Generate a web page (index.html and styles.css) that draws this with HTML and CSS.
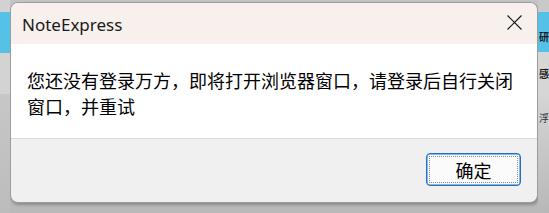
FILE: index.html
```html
<!DOCTYPE html>
<html lang="zh-CN">
<head>
<meta charset="utf-8">
<title>NoteExpress</title>
<link rel="stylesheet" href="styles.css">
</head>
<body>
<div class="desk">
  <div class="side side-left"></div>
  <div class="dialog">
    <div class="titlebar">
      <span class="title">NoteExpress</span>
      <span class="close" aria-label="关闭">
        <svg width="15" height="15" viewBox="0 0 15 15"><path d="M0.5 0.5 L14.5 14.5 M14.5 0.5 L0.5 14.5" stroke="#1b1b1b" stroke-width="1.2" fill="none"/></svg>
      </span>
    </div>
    <div class="content">
      <p class="msg">您还没有登录万方，即将打开浏览器窗口，请登录后自行关闭窗口，并重试</p>
    </div>
    <div class="footer">
      <button class="btn"><span class="btn-focus">确定</span></button>
    </div>
  </div>
  <div class="side side-right">
    <span class="bg-t t1">研</span>
    <span class="bg-t t2">感</span>
    <span class="bg-t t3">浮</span>
  </div>
</div>
</body>
</html>
```
FILE: styles.css
```css
html, body {
  margin: 0;
  padding: 0;
}
body {
  width: 549px;
  height: 213px;
  overflow: hidden;
  background: linear-gradient(to bottom, #c4c4c4 0, #b9b9b9 100%);
  font-family: "Noto Sans", "Noto Sans CJK SC", sans-serif;
}
.desk {
  display: grid;
  grid-template-columns: 10px 528px 11px;
  height: 213px;
}
.side {
  overflow: hidden;
  position: relative;
}
.side-left {
  background: linear-gradient(to bottom, #d2d2d2 0, #d2d2d2 12px, #55c1e6 12px, #55c1e6 53px, #d3d3d3 53px, #d3d3d3 94px, #c7c7c7 94px, #bcbcbc 100%);
}
.side-right {
  background: linear-gradient(to bottom, #c9c9c9 0, #c9c9c9 12px, #55c1e6 12px, #55c1e6 52px, #d6d6d6 52px, #d6d6d6 97px, #d4d4d4 97px, #cacaca 140px, #b8b8b8 100%);
}
.bg-t {
  position: absolute;
  left: 1px;
  font-family: "Noto Sans CJK SC", sans-serif;
  font-size: 10px;
  line-height: 12px;
  font-weight: 700;
  color: #1c1c1c;
  white-space: nowrap;
}
.t1 { top: 31px; }
.t2 { top: 68px; }
.t3 { top: 112px; font-weight: 400; color: #333; }

.dialog {
  margin-top: 2px;
  height: 201px;
  box-sizing: border-box;
  border: 1px solid #9c9c9c;
  border-radius: 8px;
  background: #f0f0f0;
  display: flex;
  flex-direction: column;
  overflow: hidden;
  box-shadow: 1px 2px 3px rgba(0, 0, 0, 0.25);
}
.titlebar {
  height: 41px;
  flex: none;
  background: #f8f0ed;
  display: flex;
  align-items: center;
  justify-content: space-between;
  padding: 0 15px 0 11px;
}
.title {
  font-family: "Noto Sans", sans-serif;
  font-size: 17px;
  color: #1a1a1a;
  margin-top: 1px;
}
.close {
  display: flex;
  width: 15px;
  height: 15px;
  margin-top: -2px;
}
.content {
  flex: none;
  background: #ffffff;
  height: 95px;
  box-sizing: border-box;
  padding: 23px 20px 0 16px;
  border-bottom: 1px solid #dadada;
}
.msg {
  margin: 0;
  font-family: "Noto Sans CJK SC", sans-serif;
  font-size: 18px;
  line-height: 26px;
  color: #000;
}
.footer {
  flex: 1;
  display: flex;
  justify-content: flex-end;
  align-items: flex-start;
  padding: 14px 16px 0 0;
}
.btn {
  width: 95px;
  height: 33px;
  box-sizing: border-box;
  border: 1px solid #1a74c8;
  border-radius: 4px;
  background: #fbfbfb;
  padding: 2px;
  margin: 0;
  display: flex;
  box-shadow: inset 0 0 0 0.5px #1a74c8;
}
.btn-focus {
  flex: 1;
  border: 1px dotted #8a8a8a;
  display: flex;
  align-items: center;
  justify-content: center;
  font-family: "Noto Sans CJK SC", sans-serif;
  font-size: 18px;
  color: #000;
  line-height: 1;
}
```
